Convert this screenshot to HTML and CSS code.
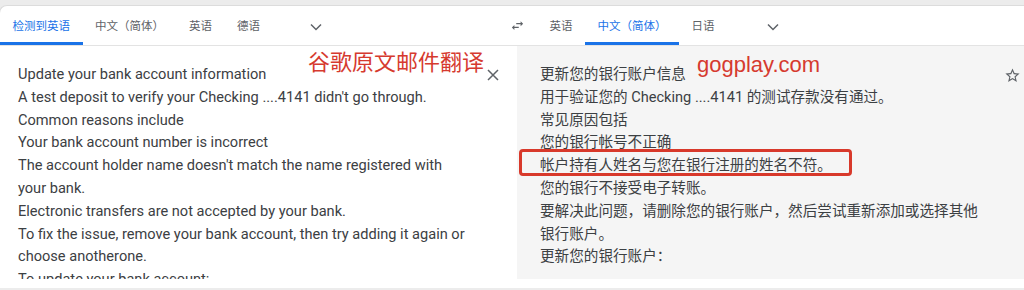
FILE: index.html
```html
<!DOCTYPE html>
<html lang="zh">
<head>
<meta charset="utf-8">
<title>Translate</title>
<link rel="stylesheet" href="styles.css">
</head>
<body>
<div class="card">
  <div class="header">
    <div class="side left-side">
      <div class="tab active">检测到英语</div>
      <div class="tab">中文（简体）</div>
      <div class="tab">英语</div>
      <div class="tab">德语</div>
      <div class="more left-more">
        <svg width="12" height="8" viewBox="0 0 12 8"><path d="M1 1.5 L6 6.5 L11 1.5" fill="none" stroke="#5f6368" stroke-width="1.5"/></svg>
      </div>
    </div>
    <div class="swap">
      <svg width="15" height="15" viewBox="0 0 24 24"><path fill="#5f6368" d="M6.99 11L3 15l3.99 4v-3H14v-2H6.99v-3zM21 9l-3.990-4v3H10v2h7.01v3L21 9z"/></svg>
    </div>
    <div class="side right-side">
      <div class="tab">英语</div>
      <div class="tab active">中文（简体）</div>
      <div class="tab">日语</div>
      <div class="more right-more">
        <svg width="12" height="8" viewBox="0 0 12 8"><path d="M1 1.5 L6 6.5 L11 1.5" fill="none" stroke="#5f6368" stroke-width="1.5"/></svg>
      </div>
    </div>
  </div>
  <div class="body">
    <div class="panel source">
      <div class="text">
        <div class="line">Update your bank account information</div>
        <div class="line">A test deposit to verify your Checking ....4141 didn't go through.</div>
        <div class="line">Common reasons include</div>
        <div class="line">Your bank account number is incorrect</div>
        <div class="line">The account holder name doesn't match the name registered with</div>
        <div class="line">your bank.</div>
        <div class="line">Electronic transfers are not accepted by your bank.</div>
        <div class="line">To fix the issue, remove your bank account, then try adding it again or</div>
        <div class="line">choose anotherone.</div>
        <div class="line">To update your bank account:</div>
      </div>
      <div class="icon-btn close">
        <svg width="12" height="12" viewBox="0 0 12 12"><path d="M1 1 L11 11 M11 1 L1 11" stroke="#5f6368" stroke-width="1.5" fill="none"/></svg>
      </div>
    </div>
    <div class="panel target">
      <div class="text">
        <div class="line">更新您的银行账户信息</div>
        <div class="line">用于验证您的 Checking ....4141 的测试存款没有通过。</div>
        <div class="line">常见原因包括</div>
        <div class="line">您的银行帐号不正确</div>
        <div class="line">帐户持有人姓名与您在银行注册的姓名不符。</div>
        <div class="line">您的银行不接受电子转账。</div>
        <div class="line">要解决此问题，请删除您的银行账户，然后尝试重新添加或选择其他</div>
        <div class="line">银行账户。</div>
        <div class="line">更新您的银行账户：</div>
      </div>
      <div class="icon-btn star">
        <svg width="17" height="17" viewBox="0 0 24 24"><path fill="#5f6368" d="M22 9.24l-7.19-.62L12 2 9.19 8.63 2 9.24l5.46 4.730L5.82 21 12 17.27 18.18 21l-1.63-7.03L22 9.24zM12 15.4l-3.76 2.27 1-4.28-3.32-2.88 4.38-.38L12 6.1l1.71 4.04 4.38.38-3.32 2.88 1 4.28L12 15.4z"/></svg>
      </div>
      <div class="highlight"></div>
    </div>
  </div>
  <div class="note note-cn">谷歌原文邮件翻译</div>
  <div class="note note-site">gogplay.com</div>
</div>
</body>
</html>
```
FILE: styles.css
```css
html, body {
  margin: 0;
  padding: 0;
}
body {
  background: #ececec;
  width: 1024px;
  height: 290px;
  overflow: hidden;
  font-family: Roboto, "Noto Sans CJK SC", sans-serif;
  color: #3c4043;
}
.card {
  position: relative;
  margin-top: 5px;
  height: 283px;
  background: #ffffff;
  border-top: 1px solid #dcdcdc;
  border-left: 1px solid #dcdcdc;
  border-radius: 8px 0 0 0;
  box-sizing: border-box;
  margin-left: -1px;
  display: flex;
  flex-direction: column;
}
.header {
  display: flex;
  height: 40px;
  box-sizing: border-box;
  border-bottom: 1px solid #e3e3e3;
  flex: none;
}
.side {
  display: flex;
  align-items: stretch;
}
.left-side {
  width: 497px;
}
.tab {
  display: flex;
  align-items: center;
  padding: 2px 12.5px 0;
  font-size: 11.5px;
  font-family: "Noto Sans CJK SC", sans-serif;
  color: #5f6368;
  border-bottom: 3px solid transparent;
  white-space: nowrap;
}
.tab.active {
  color: #1a73e8;
  border-bottom-color: #1a73e8;
}
.more {
  width: 40px;
  display: flex;
  align-items: center;
  justify-content: center;
  padding-top: 2px;
}
.left-more { margin-left: 23.5px; }
.right-more { margin-left: 25.5px; }
.swap {
  width: 40px;
  display: flex;
  align-items: center;
  justify-content: center;
  padding-bottom: 1px;
}
.body {
  display: flex;
  height: 233px;
  flex: none;
  overflow: hidden;
}
.panel {
  display: flex;
  position: relative;
  box-sizing: border-box;
  height: 233px;
  overflow: hidden;
}
.source {
  width: 517px;
  padding: 17px 12.5px 0 18px;
  background: #ffffff;
}
.target {
  flex: 1;
  padding: 17px 0 0 23px;
  background: #f5f5f5;
}
.text {
  flex: 1;
  font-size: 14.6px;
  line-height: 22.8px;
}
.line {
  white-space: nowrap;
}
.icon-btn {
  width: 24px;
  height: 24px;
  display: flex;
  align-items: center;
  justify-content: center;
  margin-top: 0;
  flex: none;
}
.highlight {
  position: absolute;
  left: 2px;
  top: 103px;
  width: 333px;
  height: 27px;
  box-sizing: border-box;
  border: 3px solid #d8392b;
  border-radius: 4px;
}
.note {
  position: absolute;
  color: #d63a2f;
  white-space: nowrap;
}
.note-cn {
  left: 308px;
  top: 43px;
  font-size: 22px;
  line-height: 22px;
  font-family: "Noto Sans CJK SC", sans-serif;
}
.note-site {
  left: 697px;
  top: 48px;
  font-size: 22px;
  line-height: 22px;
  font-family: "Liberation Sans", Arial, sans-serif;
}
```
